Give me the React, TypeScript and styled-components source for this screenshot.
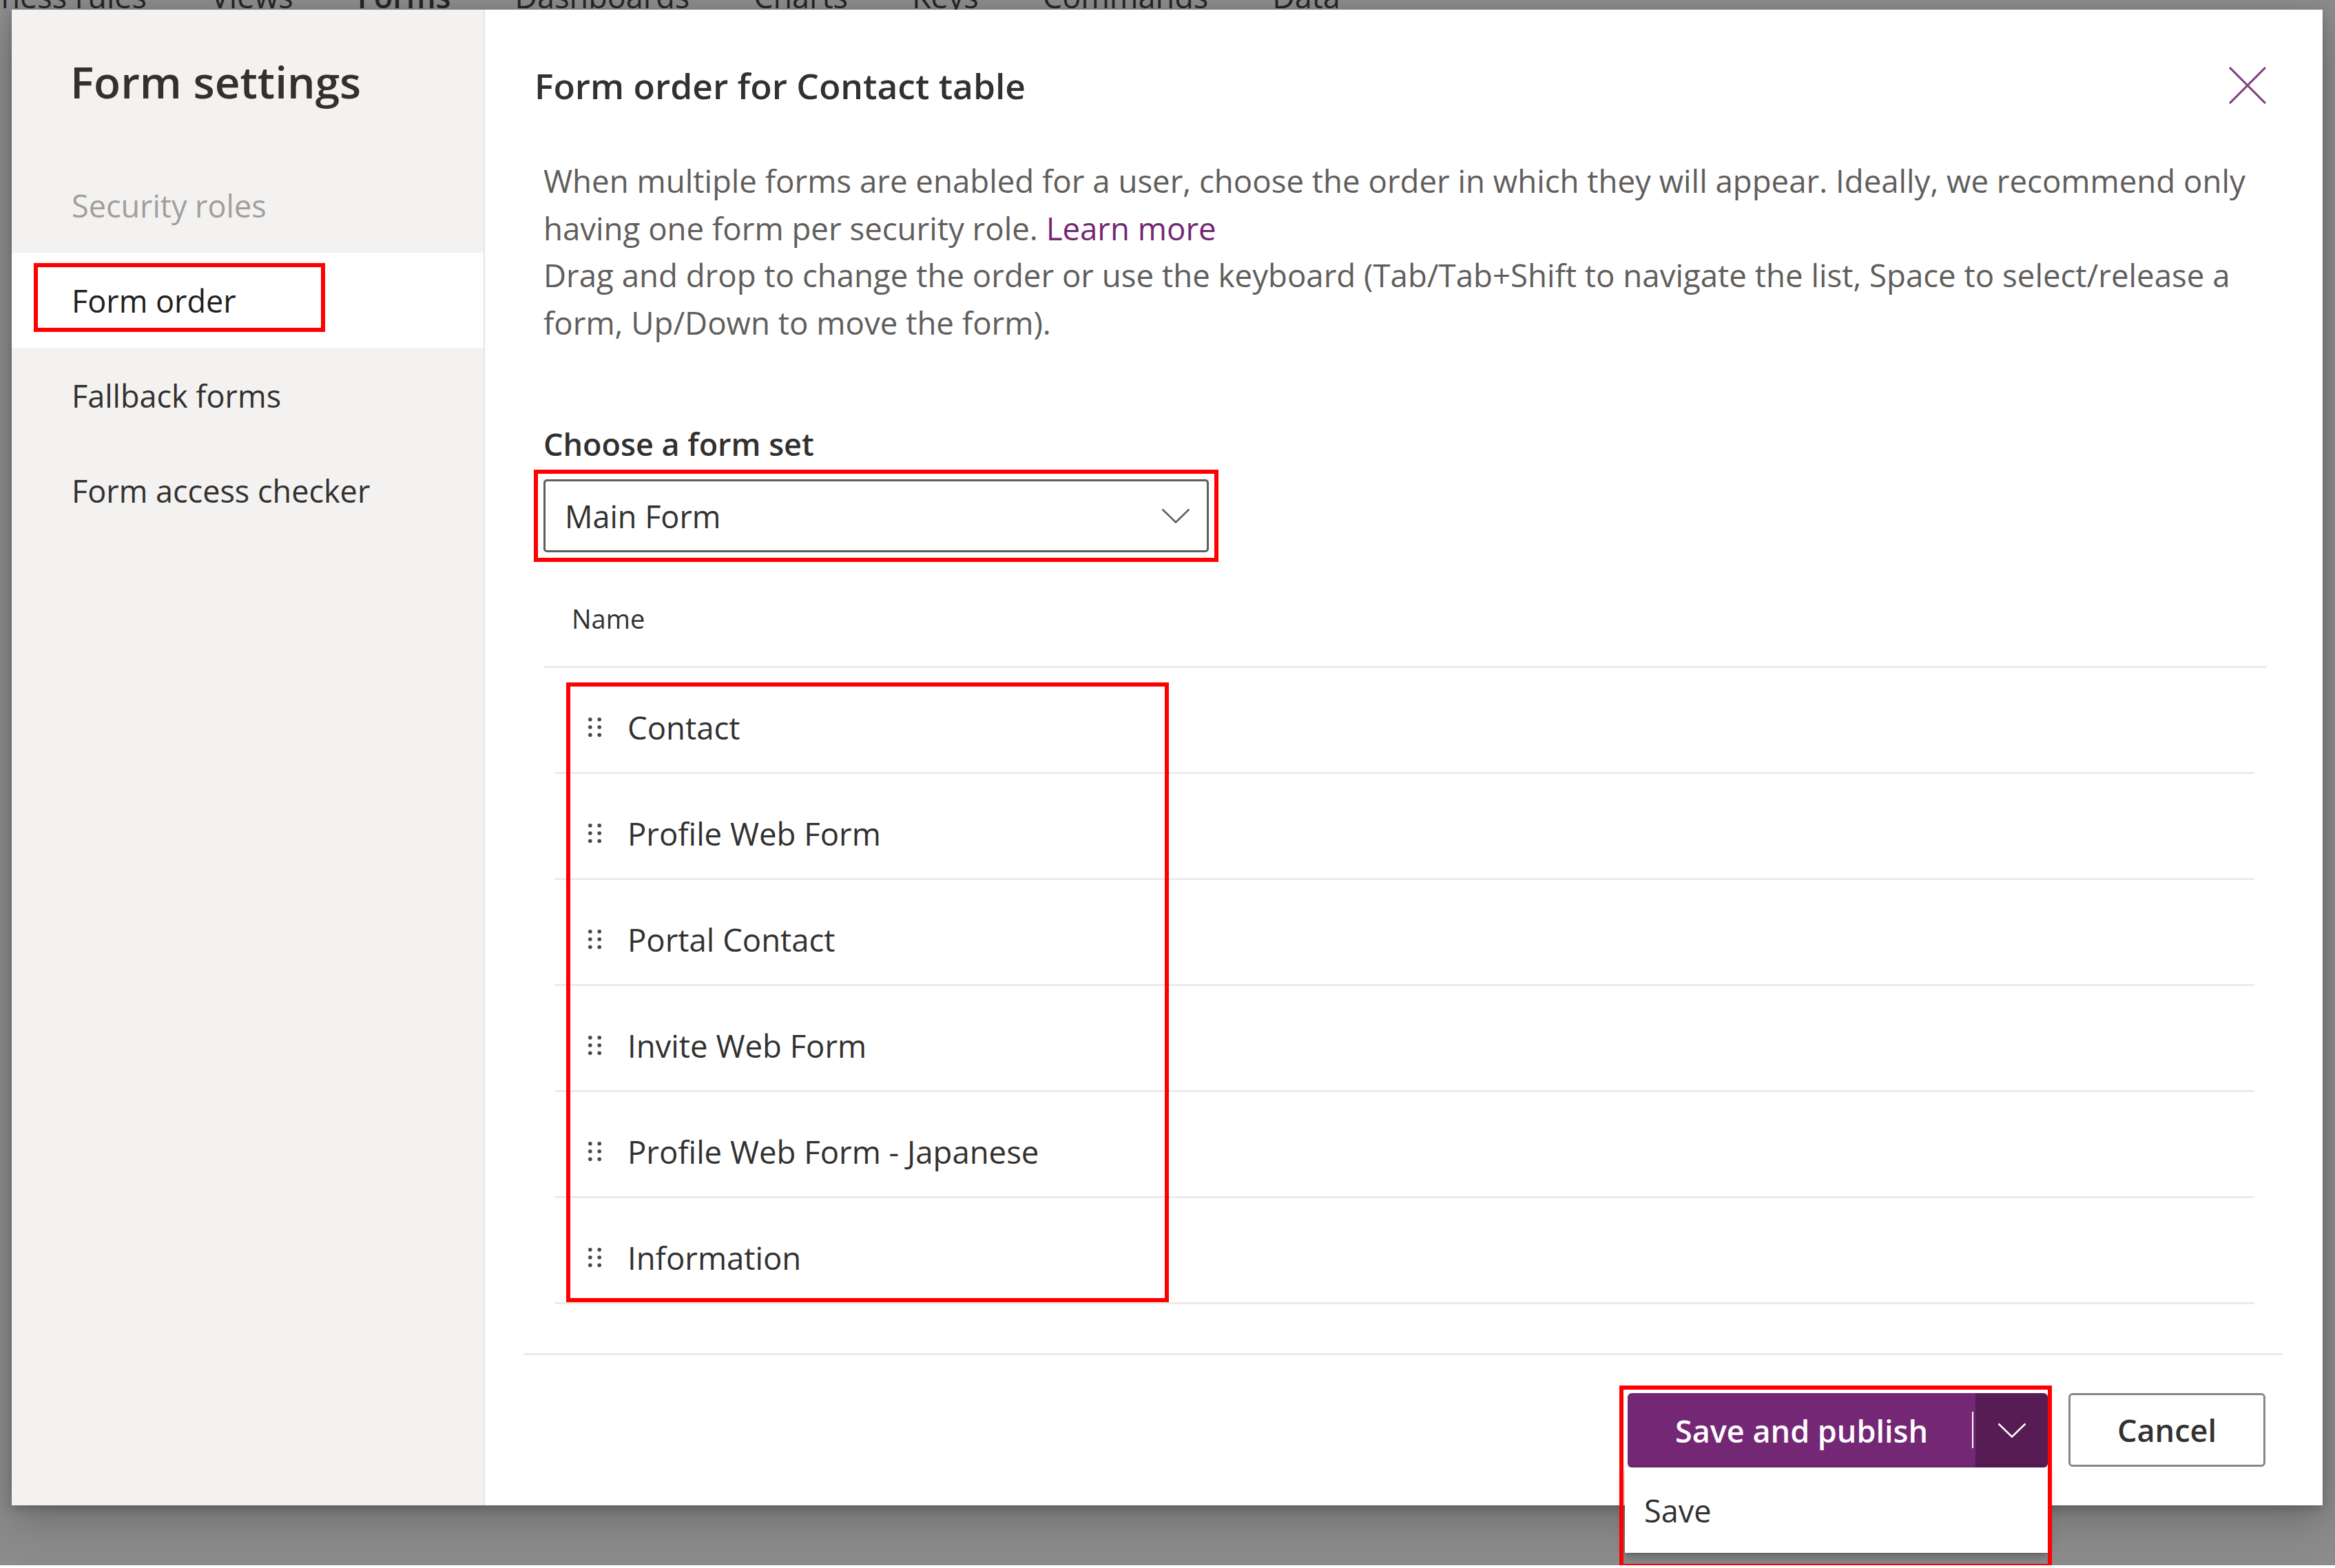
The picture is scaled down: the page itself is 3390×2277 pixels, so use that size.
import React from "react";
import styled, { createGlobalStyle } from "styled-components";

const GlobalStyle = createGlobalStyle`
  html, body {
    margin: 0;
    padding: 0;
    background: #ffffff;
    overflow: hidden;
  }
  body {
    font-family: "Open Sans", "Noto Sans", sans-serif;
    color: #323130;
  }
  *, *::before, *::after {
    box-sizing: border-box;
  }
`;

const Backdrop = styled.div`
  width: 3390px;
  height: 2273px;
  background: #8c8c8c;
  padding: 0 18px 0 17px;
  display: flex;
  flex-direction: column;
`;

const TabStrip = styled.nav`
  flex: none;
  height: 14px;
  margin-left: -17px;
  display: flex;
  align-items: flex-end;
  gap: 93px;
  overflow: hidden;
`;

const TabLabel = styled.span<{ $selected?: boolean; $offset?: number }>`
  flex: none;
  font-size: 45px;
  line-height: 45px;
  margin-bottom: -3px;
  margin-left: ${(p) => (p.$offset ? `${p.$offset}px` : "0")};
  font-weight: ${(p) => (p.$selected ? 600 : 400)};
  color: #262626;
  white-space: nowrap;
`;

const Dialog = styled.div`
  flex: none;
  height: 2172px;
  display: grid;
  grid-template-columns: 687px 1fr;
  background: #ffffff;
  position: relative;
  box-shadow: 0 22px 60px rgba(0, 0, 0, 0.22), 0 5px 14px rgba(0, 0, 0, 0.2);
`;

const Sidebar = styled.aside`
  background: #f3f2f1;
  border-right: 2px solid #e6e4e2;
  padding-top: 65px;
  display: flex;
  flex-direction: column;
`;

const SidebarTitle = styled.h1`
  margin: 0 0 70px 85px;
  font-size: 64px;
  line-height: 80px;
  font-weight: 600;
  color: #323130;
  white-space: nowrap;
`;

const NavList = styled.div`
  display: flex;
  flex-direction: column;
`;

const NavItem = styled.div<{ $active?: boolean; $disabled?: boolean }>`
  position: relative;
  height: 138px;
  display: flex;
  align-items: center;
  padding-left: 87px;
  font-size: 45px;
  white-space: nowrap;
  background: ${(p) => (p.$active ? "#ffffff" : "transparent")};
  color: ${(p) => (p.$disabled ? "#a19f9d" : p.$active ? "#201f1e" : "#323130")};
`;

const Annotation = styled.div`
  position: absolute;
  border: 6px solid #ff0000;
  pointer-events: none;
  z-index: 5;
`;

const NavHighlight = styled(Annotation)`
  left: 32px;
  top: 15px;
  width: 423px;
  height: 100px;
`;

const Main = styled.main`
  display: flex;
  flex-direction: column;
  min-width: 0;
`;

const Header = styled.header`
  display: flex;
  align-items: center;
  justify-content: space-between;
  padding: 78px 82px 0 72px;
`;

const Title = styled.h2`
  margin: 0;
  font-size: 51.5px;
  line-height: 64px;
  font-weight: 600;
  color: #323130;
  white-space: nowrap;
`;

const CloseButton = styled.button`
  width: 54px;
  height: 54px;
  padding: 0;
  border: 0;
  background: none;
  display: flex;
  cursor: pointer;
`;

const Body = styled.div`
  padding: 72px 82px 0 85px;
  display: flex;
  flex-direction: column;
  align-items: stretch;
`;

const Description = styled.p`
  margin: 0;
  font-size: 45.6px;
  line-height: 68.5px;
  color: #605e5c;
  white-space: nowrap;
`;

const Link = styled.a`
  color: #742774;
  text-decoration: none;
`;

const FieldLabel = styled.label`
  display: block;
  margin-top: 113px;
  font-size: 45px;
  line-height: 60px;
  font-weight: 600;
  color: #323130;
`;

const SelectFrame = styled.div`
  align-self: flex-start;
  margin: 7px 0 -14px -14px;
  padding: 8px;
  border: 6px solid #ff0000;
`;

const Select = styled.div`
  width: 966px;
  height: 106px;
  border: 3px solid #605e5c;
  border-radius: 5px;
  display: flex;
  align-items: center;
  justify-content: space-between;
  padding: 0 24px 0 28px;
  font-size: 45px;
  color: #323130;
  background: #ffffff;
`;

const TableHeader = styled.div`
  padding: 71px 0 44px 41px;
  font-size: 38px;
  line-height: 50px;
  color: #323130;
  border-bottom: 3px solid #edebe9;
`;

const RowList = styled.div`
  position: relative;
  padding: 0 17px;
  display: flex;
  flex-direction: column;
`;

const RowsHighlight = styled(Annotation)`
  left: 33px;
  top: 21px;
  width: 875px;
  height: 900px;
`;

const Row = styled.div`
  height: 154px;
  border-bottom: 3px solid #edebe9;
  display: flex;
  align-items: center;
  gap: 38px;
  padding: 21px 0 0 48px;
  font-size: 45.5px;
  color: #323130;
  white-space: nowrap;
`;

const Footer = styled.footer`
  margin: auto 58px 0 56px;
  border-top: 3px solid #edebe9;
  padding: 55px 25px 55px 0;
  display: flex;
  justify-content: flex-end;
  align-items: flex-start;
  gap: 30px;
`;

const SplitGroup = styled.div`
  position: relative;
  display: flex;
  height: 108px;
`;

const PrimaryButton = styled.button`
  position: relative;
  width: 505px;
  height: 108px;
  border: 0;
  border-radius: 6px 0 0 6px;
  background: #742774;
  color: #ffffff;
  font-family: "Open Sans", sans-serif;
  font-size: 45px;
  font-weight: 600;
  padding: 0;

  &::after {
    content: "";
    position: absolute;
    right: 3px;
    top: 27px;
    width: 2px;
    height: 53px;
    background: #ffffff;
  }
`;

const MenuToggle = styled.button`
  width: 105px;
  height: 108px;
  border: 0;
  border-radius: 0 6px 6px 0;
  background: #561c53;
  display: flex;
  align-items: center;
  justify-content: center;
  padding: 0;
`;

const Menu = styled.div`
  position: absolute;
  left: -4px;
  top: 108px;
  width: 614px;
  height: 124px;
  background: #ffffff;
  box-shadow: 0 6px 14px rgba(0, 0, 0, 0.28), 0 1px 4px rgba(0, 0, 0, 0.12);
  display: flex;
  align-items: center;
  padding-left: 28px;
  font-size: 45px;
  color: #323130;
  z-index: 4;
`;

const SaveHighlight = styled(Annotation)`
  left: -12px;
  top: -11px;
  width: 628px;
  height: 265px;
`;

const SecondaryButton = styled.button`
  width: 286px;
  height: 107px;
  border: 3px solid #8a8886;
  border-radius: 6px;
  background: #ffffff;
  color: #323130;
  font-family: "Open Sans", sans-serif;
  font-size: 45px;
  font-weight: 600;
  padding: 0;
`;

const DragHandle = () => (
  <svg width="19" height="28" viewBox="0 0 19 28" aria-hidden="true">
    {[2.8, 14, 25.2].map((y) =>
      [2.8, 16.2].map((x) => <circle key={`${x}-${y}`} cx={x} cy={y} r="2.8" fill="#4a4846" />)
    )}
  </svg>
);

const Chevron = ({ color, width = 2.5 }: { color: string; width?: number }) => (
  <svg width="42" height="22" viewBox="0 0 42 22" aria-hidden="true">
    <polyline points="1.5,1.5 21,20.5 40.5,1.5" fill="none" stroke={color} strokeWidth={width} />
  </svg>
);

const forms = [
  "Contact",
  "Profile Web Form",
  "Portal Contact",
  "Invite Web Form",
  "Profile Web Form - Japanese",
  "Information",
];

const tabs = ["Business rules", "Views", "Forms", "Dashboards", "Charts", "Keys", "Commands", "Data"];

export default function App() {
  return (
    <>
      <GlobalStyle />
      <Backdrop>
        <TabStrip>
          {tabs.map((t, i) => (
            <TabLabel key={t} $selected={t === "Forms"} $offset={i === 0 ? -88 : 0}>
              {t}
            </TabLabel>
          ))}
        </TabStrip>
        <Dialog>
          <Sidebar>
            <SidebarTitle>Form settings</SidebarTitle>
            <NavList>
              <NavItem $disabled>Security roles</NavItem>
              <NavItem $active>
                Form order
                <NavHighlight />
              </NavItem>
              <NavItem>Fallback forms</NavItem>
              <NavItem>Form access checker</NavItem>
            </NavList>
          </Sidebar>
          <Main>
            <Header>
              <Title>Form order for Contact table</Title>
              <CloseButton aria-label="Close">
                <svg width="54" height="54" viewBox="0 0 54 54" aria-hidden="true">
                  <path d="M1 1 L53 53 M53 1 L1 53" stroke="#7e3a7c" strokeWidth="3" fill="none" />
                </svg>
              </CloseButton>
            </Header>
            <Body>
              <Description>
                When multiple forms are enabled for a user, choose the order in which they will appear. Ideally, we
                recommend only
                <br />
                having one form per security role. <Link href="#">Learn more</Link>
              </Description>
              <Description>
                Drag and drop to change the order or use the keyboard (Tab/Tab+Shift to navigate the list, Space to
                select/release a
                <br />
                form, Up/Down to move the form).
              </Description>
              <FieldLabel>Choose a form set</FieldLabel>
              <SelectFrame>
                <Select>
                  <span>Main Form</span>
                  <Chevron color="#605e5c" />
                </Select>
              </SelectFrame>
              <TableHeader>Name</TableHeader>
              <RowList>
                {forms.map((f) => (
                  <Row key={f}>
                    <DragHandle />
                    <span>{f}</span>
                  </Row>
                ))}
                <RowsHighlight />
              </RowList>
            </Body>
            <Footer>
              <SplitGroup>
                <PrimaryButton>Save and publish</PrimaryButton>
                <MenuToggle aria-label="More save options">
                  <Chevron color="#ffffff" width={2.5} />
                </MenuToggle>
                <Menu>Save</Menu>
                <SaveHighlight />
              </SplitGroup>
              <SecondaryButton>Cancel</SecondaryButton>
            </Footer>
          </Main>
        </Dialog>
      </Backdrop>
    </>
  );
}
